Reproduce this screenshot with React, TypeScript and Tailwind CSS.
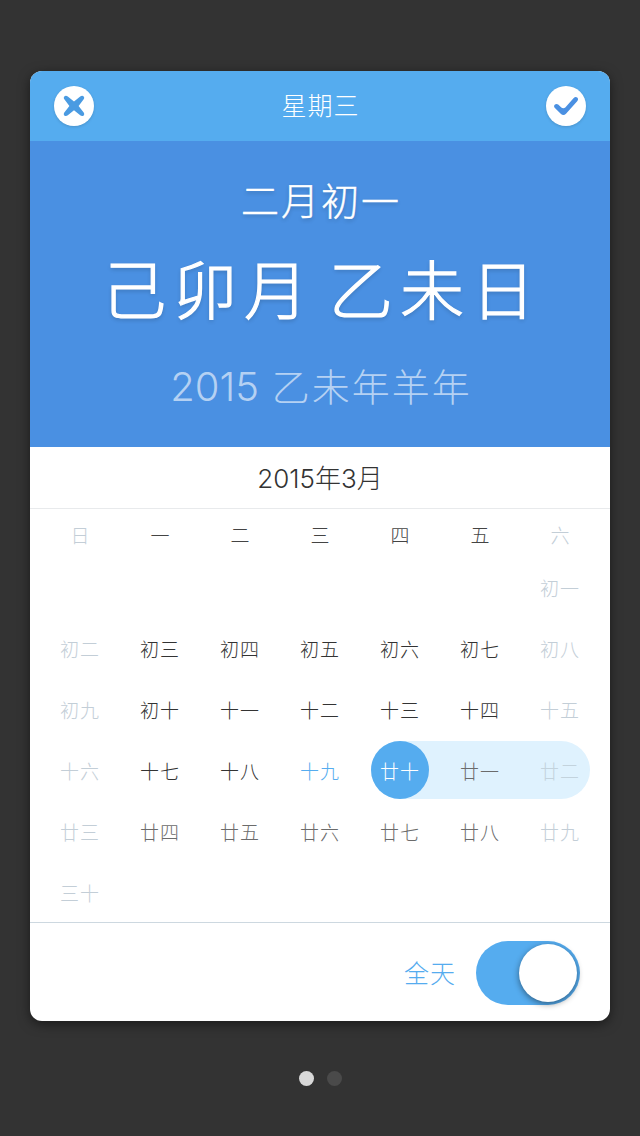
import React from "react";

type Tone = "dark" | "medium" | "muted" | "accent" | "selected" | "faded";

const TONES: Record<Tone, string> = {
  dark: "text-[#333333]",
  medium: "text-[#6b6b6b]",
  muted: "text-[#c3ced7]",
  accent: "text-[#55acef]",
  selected: "text-white",
  faded: "text-[#c3d3dd]",
};

const WEEKDAYS = ["日", "一", "二", "三", "四", "五", "六"];

const COLUMNS = [
  "col-start-1",
  "col-start-2",
  "col-start-3",
  "col-start-4",
  "col-start-5",
  "col-start-6",
  "col-start-7",
];

const WEEKS: string[][] = [
  ["", "", "", "", "", "", "初一"],
  ["初二", "初三", "初四", "初五", "初六", "初七", "初八"],
  ["初九", "初十", "十一", "十二", "十三", "十四", "十五"],
  ["十六", "十七", "十八", "十九", "廿十", "廿一", "廿二"],
  ["廿三", "廿四", "廿五", "廿六", "廿七", "廿八", "廿九"],
  ["三十", "", "", "", "", "", ""],
];

const TODAY = "十九";
const RANGE_START = "廿十";
const RANGE_WEEK = 3;

function toneFor(day: string, column: number, week: number): Tone {
  if (day === TODAY) return "accent";
  if (day === RANGE_START) return "selected";
  if (column === 6 && week === RANGE_WEEK) return "faded";
  if (column === 0 || column === 6) return "muted";
  if (week > RANGE_WEEK || (week === RANGE_WEEK && column > 4)) return "medium";
  return "dark";
}

function Week({ days, index }: { days: string[]; index: number }) {
  return (
    <div className="grid h-[58px] grid-cols-7 grid-rows-[58px]">
      {index === RANGE_WEEK && (
        <div className="col-span-3 col-start-5 row-start-1 mr-[10px] ml-[11px] rounded-full bg-[#dff2fe]">
          <div className="size-[58px] rounded-full bg-[#55acef]" />
        </div>
      )}
      {days.map((day, column) => (
        <span
          key={column}
          className={`row-start-1 flex items-center justify-center pt-1 ${COLUMNS[column]} ${TONES[toneFor(day, column, index)]}`}
        >
          {day}
        </span>
      ))}
    </div>
  );
}

function Header() {
  return (
    <header className="flex h-[70px] items-center justify-between bg-[#55acef] px-6 text-white">
      <button className="flex size-10 items-center justify-center rounded-full bg-white shadow-[0_1px_3px_rgba(0,0,0,0.15)]" aria-label="关闭">
        <svg width="40" height="40" viewBox="0 0 40 40" fill="#4a9be2">
          <path d="M10.3 10.4c.9-.9 2.5-.8 3.5.2l6.2 5 6.2-5c1-1 2.6-1.1 3.5-.2.8.8.6 2.1-.2 3.1L24.6 20l4.9 6.3c.8 1 1 2.3.2 3.1-.9.9-2.5.8-3.5-.2L20 24.3l-6.2 4.9c-1 1-2.6 1.1-3.5.2-.8-.8-.6-2.1.2-3.1l4.9-6.3-4.9-6.5c-.8-1-1-2.3-.2-3.1Z" />
        </svg>
      </button>
      <h1 className="pl-px text-[25px] leading-none tracking-[1px]">星期三</h1>
      <button className="flex size-10 items-center justify-center rounded-full bg-white shadow-[0_1px_3px_rgba(0,0,0,0.15)]" aria-label="确定">
        <svg width="40" height="40" viewBox="0 0 40 40" fill="#4a90e2">
          <path d="M8.7 18.7c.9-1 2.4-1 3.5-.2l3.1 3c1.2 1 2.8 1 4 0l8.4-9.5c1.1-1.2 2.5-1.3 3.5-.5 1.1.9 1.1 2.4.2 3.5L20 27.8c-1.4 1.5-3.6 1.6-5 .3l-6.1-6c-1-1-1.1-2.4-.2-3.4Z" />
        </svg>
      </button>
    </header>
  );
}

export default function App() {
  return (
    <main
      lang="zh-CN"
      className="flex h-[1136px] w-[640px] flex-col items-center bg-[#333333] pt-[71px] font-['Inter','Noto_Sans_CJK_SC',sans-serif] font-light"
    >
      <section className="flex h-[950px] w-[580px] flex-col overflow-hidden rounded-xl bg-white shadow-[0_3px_12px_rgba(0,0,0,0.5)]">
        <Header />

        <div className="flex h-[306px] flex-col items-center bg-[#4a90e2] pt-9 whitespace-nowrap text-white">
          <p className="h-12 pl-0.5 text-[38px] leading-[48px] tracking-[2px] [-webkit-text-stroke:0.4px_white] [text-shadow:0_2px_4px_rgba(0,0,0,0.2)]">二月初一</p>
          <p className="mt-[22px] h-[88px] pl-1 text-[64px] leading-[88px] tracking-[7px] [word-spacing:-11px] [-webkit-text-stroke:1.2px_white] [text-shadow:0_2px_4px_rgba(0,0,0,0.2)]">己卯月 乙未日</p>
          <p className="mt-7 flex h-12 items-baseline gap-[13px] pl-0.5 text-[38px] leading-[48px] text-white/60">
            <span className="text-[40px]">2015</span>
            <span className="tracking-[2px]">乙未年羊年</span>
          </p>
        </div>

        <h2 className="flex h-[62px] items-center justify-center border-b border-[#e8eaec] pt-0.5 text-[26px] leading-none text-[#333333]">
          2015年3月
        </h2>

        <div className="px-[10px] text-[19px] leading-none tracking-[1px]">
          <div className="grid h-[49px] grid-cols-7 pt-[5px]">
            {WEEKDAYS.map((day, column) => (
              <span
                key={day}
                className={`flex items-center justify-center pl-px ${column === 0 || column === 6 ? "text-[#c3ced7]" : "text-[#444444]"}`}
              >
                {day}
              </span>
            ))}
          </div>
          <div className="flex flex-col gap-[3px]">
            {WEEKS.map((days, index) => (
              <Week key={index} days={days} index={index} />
            ))}
          </div>
        </div>

        <footer className="mt-px flex flex-1 items-center justify-end gap-5 border-t border-[#cdd8e0] pt-0.5 pr-[30px]">
          <span className="pt-0.5 text-[25px] leading-none tracking-[1px] text-[#55acef]">全天</span>
          <div className="flex h-16 w-[104px] items-center justify-end rounded-full bg-[#55acef] pr-[3px]">
            <div className="size-[58px] rounded-full bg-white shadow-[0_2px_6px_rgba(0,0,0,0.45)]" />
          </div>
        </footer>
      </section>

      <nav className="mt-[50px] flex gap-[13px]">
        <span className="size-[15px] rounded-full bg-[#d8d8d8]" />
        <span className="size-[15px] rounded-full bg-[#4a4a4a]" />
      </nav>
    </main>
  );
}
